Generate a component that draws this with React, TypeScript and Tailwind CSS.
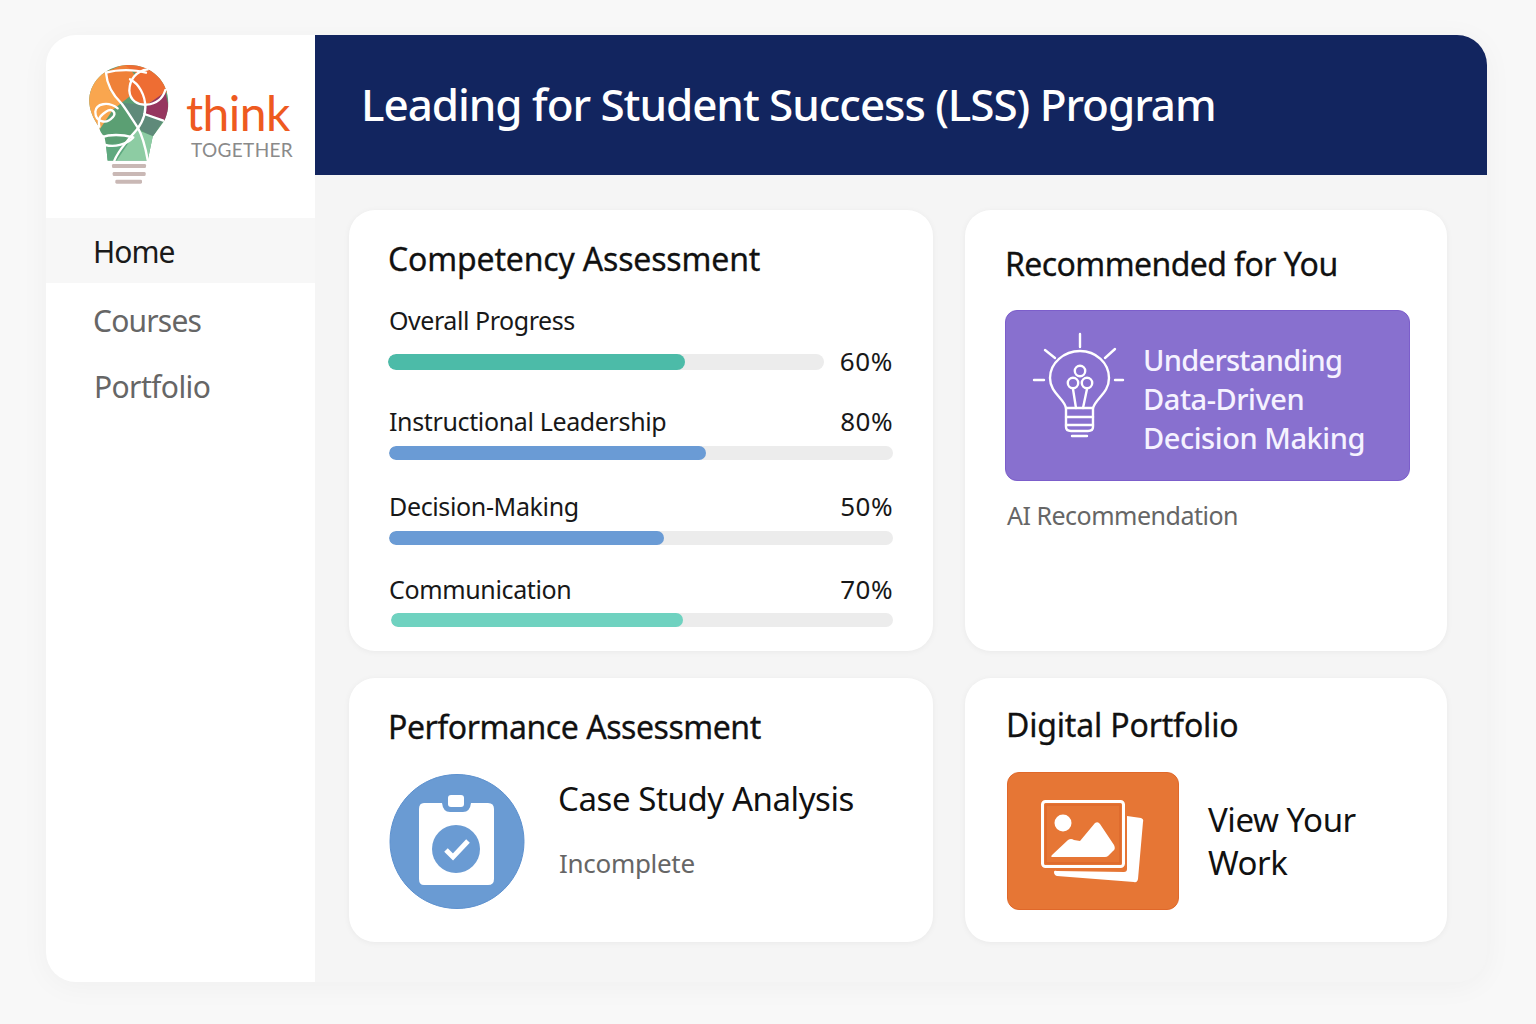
const font = { fontFamily: '"Noto Sans", sans-serif' };

function Logo() {
  return (
    <svg viewBox="117 96 270 375" className="h-[125px] w-[90px] shrink-0">
      <defs>
        <clipPath id="bulb">
          <path d="M160 292C138 262 128 232 130 205C134 150 185 105 248 105C340 105 392 190 355 272L320 320L305 392L185 392L180 345L175 318Q162 310 160 292Z" />
        </clipPath>
      </defs>
      <g clipPath="url(#bulb)">
        <rect x="117" y="96" width="270" height="300" fill="#5b9f73" />
        <polygon points="120,100 185,125 190,180 225,220 200,240 160,300 120,300" fill="#f9a64f" />
        <polygon points="180,125 240,100 270,140 250,200 225,220 190,180" fill="#ef8139" />
        <polygon points="230,100 300,105 375,170 360,190 300,225 260,210 245,170 270,130" fill="#ee6d33" />
        <polygon points="358,185 380,285 355,272 297,250 303,225" fill="#96365f" />
        <polygon points="225,218 300,225 295,250 352,270 320,320 285,300 262,280" fill="#5f8a7a" />
        <polygon points="275,300 325,320 310,395 205,395 240,345" fill="#8dcca3" />
        <polygon points="175,345 250,335 210,395 175,395" fill="#5fa97f" />
      </g>
      <g fill="none" stroke="#fff" strokeWidth="7" strokeLinecap="round" strokeLinejoin="round">
        <path d="M180 128C183 170 205 200 228 222C245 245 260 270 275 292C288 315 298 350 305 390" />
        <path d="M180 128C215 118 265 118 300 128" />
        <path d="M305 118C270 122 250 150 250 182C252 212 275 226 302 224C325 222 348 212 358 180" />
        <path d="M252 148C278 160 298 195 298 232C298 262 280 295 252 322C235 345 215 365 205 392" />
        <path d="M215 235C185 212 150 222 148 245C148 275 180 285 200 262C212 250 200 232 180 245C165 255 155 262 160 290" />
        <path d="M295 252L352 272" />
        <path d="M165 322C195 312 230 314 262 322C240 345 205 352 178 345" />
      </g>
      <rect x="198" y="402" width="102" height="12" rx="4" fill="#c9b8b5" />
      <rect x="200" y="426" width="99" height="12" rx="4" fill="#c9b8b5" />
      <rect x="208" y="449" width="80" height="12" rx="4" fill="#c9b8b5" />
    </svg>
  );
}

function IdeaIcon() {
  return (
    <svg viewBox="1030 330 96 110" className="mb-[22px] h-[110px] w-[96px] shrink-0" fill="none" stroke="#fff" strokeWidth="2.4" strokeLinecap="round" strokeLinejoin="round">
      <path d="M1080 334V347M1045 350L1055 358M1115 349L1105 358M1034 380H1044M1115 380H1123" />
      <path d="M1066 408C1064 398 1050 393 1050 378C1050 363 1064 351 1080 351C1096 351 1109 363 1109 378C1109 393 1096 398 1093 408" />
      <circle cx="1080" cy="371" r="5.2" />
      <circle cx="1073" cy="383" r="5.2" />
      <circle cx="1087" cy="383" r="5.2" />
      <path d="M1073 389L1076 408M1087 389L1083 408" />
      <path d="M1066 408H1093M1066 417H1093M1066 425H1093" />
      <path d="M1066 408V427Q1066 431 1071 431H1088Q1093 431 1093 427V408M1072 436H1087" />
    </svg>
  );
}

function ClipIcon() {
  return (
    <svg viewBox="389 773 136 137" className="h-[137px] w-[136px] shrink-0">
      <circle cx="457" cy="841.5" r="67" fill="#6a9bd3" stroke="#5d91cf" />
      <path d="M424 803H442Q443 812 450 812H463Q470 812 471 803H488Q494 803 494 809V879Q494 885 488 885H424Q419 885 419 879V809Q419 803 424 803Z" fill="#fff" />
      <rect x="448" y="795" width="16" height="12" rx="3" fill="#fff" />
      <circle cx="456" cy="849" r="24" fill="#6a9bd3" />
      <path d="M446 850L453 857L468 841" fill="none" stroke="#fff" strokeWidth="5" />
    </svg>
  );
}

function PhotoIcon() {
  return (
    <svg viewBox="1031 795 125 95" className="h-[95px] w-[125px]">
      <path d="M1127 817L1141 819Q1144 820 1143 823L1138 880Q1137 884 1134 883L1057 877Q1054 876 1054 873Q1054 871 1057 872L1124 873Q1127 873 1127 870Z" fill="#fff" />
      <rect x="1042.5" y="802.5" width="81" height="65" rx="3" fill="none" stroke="#fff" strokeWidth="3" />
      <rect x="1046" y="806" width="74" height="58" fill="none" stroke="#dd6a2c" strokeWidth="1.5" />
      <path d="M1052 856L1068 841Q1071 839 1074 841L1080 842L1095 824Q1098 822 1100 825L1114 846Q1116 850 1113 852L1108 857Q1107 858 1105 858H1053Q1050 858 1052 856Z" fill="#fff" />
      <circle cx="1063" cy="824" r="8.5" fill="#fff" />
    </svg>
  );
}

function Bar({ fill, value, h = 'h-[14px]' }: { fill: string; value: string; h?: string }) {
  return (
    <div className={`w-full overflow-hidden rounded-full bg-[#ececec] ${h}`}>
      <div className={`h-full rounded-full ${fill}`} style={{ width: value }} />
    </div>
  );
}

function Skill({ name, pct, fill, value, mt, gap = 'mt-[9px]', inset = '' }: { name: string; pct: string; fill: string; value: string; mt: string; gap?: string; inset?: string }) {
  return (
    <div className={mt}>
      <div className="flex h-[30px] items-center justify-between text-[25px] text-[#181818]">
        <span className="tracking-[-0.36px]">{name}</span>
        <span className="pb-[2px] text-[26px] tracking-[0.5px]">{pct}</span>
      </div>
      <div className={`${gap} ${inset}`}>
        <Bar fill={fill} value={value} />
      </div>
    </div>
  );
}

export default function App() {
  return (
    <div style={font} className="flex h-[1024px] w-full bg-[#f8f8f8] pt-[35px] pr-[49px] pb-[42px] pl-[46px]">
      <div className="flex w-full overflow-hidden rounded-[30px] bg-[#f5f5f5] shadow-[0_4px_30px_rgba(0,0,0,0.04)]">
        <aside className="flex w-[269px] shrink-0 flex-col bg-white">
          <div className="flex h-[183px] items-start pt-[27px] pl-[39px]">
            <Logo />
            <div className="mt-[24px] flex flex-col" style={{ fontFamily: 'Lato, sans-serif' }}>
              <span className="pl-[11px] text-[48px] leading-[53px] font-normal tracking-[-0.6px] text-[#ee5a1f]">think</span>
              <span className="pl-[16px] text-[19px] leading-[22px] tracking-[0.35px] text-[#8a8a8a]">TOGETHER</span>
            </div>
          </div>
          <nav className="flex flex-col text-[30px] tracking-[-0.8px]">
            <a className="flex h-[65px] items-center bg-[#f7f7f7] pt-[2px] pl-[47px] tracking-[-1px] text-[#1a1a1a]">Home</a>
            <a className="mt-[4px] flex h-[66px] items-center pl-[47px] text-[#666666]">Courses</a>
            <a className="flex h-[66px] items-center pl-[48px] tracking-[-0.6px] text-[#666666]">Portfolio</a>
          </nav>
        </aside>
        <main className="flex min-w-0 flex-1 flex-col">
          <header className="flex h-[140px] shrink-0 items-center bg-[#12255f] pb-[2px] pl-[46px] text-[44px] font-medium tracking-[-1.05px] text-white">
            Leading for Student Success (LSS) Program
          </header>
          <div className="grid flex-1 grid-cols-[584px_482px] grid-rows-[441px_264px] gap-x-[32px] gap-y-[27px] pt-[35px] pl-[34px]">
            <section className="rounded-[26px] bg-white px-[40px] pt-[26px] shadow-[0_1px_6px_rgba(0,0,0,0.05)]">
              <h2 className="-ml-[1px] text-[32px] leading-[46px] tracking-[-0.17px] text-[#111111] [-webkit-text-stroke:0.3px_#111111]">Competency Assessment</h2>
              <div className="mt-[24px] flex h-[30px] items-center text-[25px] tracking-[-0.45px] text-[#181818]">Overall Progress</div>
              <div className="mt-[12px] flex items-center justify-between">
                <div className="-ml-[1px] w-[436px]">
                  <Bar fill="bg-[#4cbba8]" value="68.2%" h="h-[16px]" />
                </div>
                <span className="pb-[2px] text-[26px] leading-[26px] tracking-[0.6px] text-[#181818]">60%</span>
              </div>
              <Skill name="Instructional Leadership" pct="80%" fill="bg-[#6a9bd5]" value="62.9%" mt="mt-[31px]" />
              <Skill name="Decision-Making" pct="50%" fill="bg-[#6a9bd5]" value="54.6%" mt="mt-[32px]" />
              <Skill name="Communication" pct="70%" fill="bg-[#6fd2c0]" value="58.2%" mt="mt-[30px]" gap="mt-[8px]" inset="ml-[2px]" />
            </section>
            <section className="rounded-[26px] bg-white pt-[31px] pr-[37px] pl-[40px] shadow-[0_1px_6px_rgba(0,0,0,0.05)]">
              <h2 className="text-[32px] leading-[46px] tracking-[-0.58px] text-[#111111] [-webkit-text-stroke:0.3px_#111111]">Recommended for You</h2>
              <div className="mt-[23px] flex h-[171px] items-center rounded-[12px] border border-[#7c5ecb] bg-[#8870cf] pl-[24px]">
                <IdeaIcon />
                <div className="pt-[6px] pl-[17px] text-[29px] leading-[39px] font-medium tracking-[-0.45px] text-[#f5f2ff]">
                  <span className="tracking-[-0.7px]">Understanding</span>
                  <br />
                  Data-Driven
                  <br />
                  Decision Making
                </div>
              </div>
              <p className="mt-[16px] pl-[2px] text-[25px] leading-[36px] tracking-[-0.5px] text-[#666666]">AI Recommendation</p>
            </section>
            <section className="rounded-[26px] bg-white px-[40px] pt-[26px] shadow-[0_1px_6px_rgba(0,0,0,0.05)]">
              <h2 className="-ml-[1px] text-[32px] leading-[46px] tracking-[-0.45px] text-[#111111] [-webkit-text-stroke:0.3px_#111111]">Performance Assessment</h2>
              <div className="mt-[23px] flex items-start">
                <ClipIcon />
                <div className="pl-[33px]">
                  <p className="mt-[3px] text-[33px] leading-[46px] tracking-[-0.42px] text-[#111111]">Case Study Analysis</p>
                  <p className="mt-[23px] pl-[1px] text-[26px] leading-[36px] tracking-[-0.3px] text-[#666666]">Incomplete</p>
                </div>
              </div>
            </section>
            <section className="rounded-[26px] bg-white px-[42px] pt-[24px] shadow-[0_1px_6px_rgba(0,0,0,0.05)]">
              <h2 className="-ml-[1px] text-[32px] leading-[46px] tracking-[-0.17px] text-[#111111] [-webkit-text-stroke:0.3px_#111111]">Digital Portfolio</h2>
              <div className="mt-[24px] flex items-center">
                <div className="flex h-[138px] w-[172px] shrink-0 items-center justify-center rounded-[12px] border border-[#e0682a] bg-[#e67635]">
                  <PhotoIcon />
                </div>
                <p className="pl-[29px] text-[33px] leading-[43px] tracking-[-0.45px] text-[#111111]">
                  View Your
                  <br />
                  Work
                </p>
              </div>
            </section>
          </div>
        </main>
      </div>
    </div>
  );
}
